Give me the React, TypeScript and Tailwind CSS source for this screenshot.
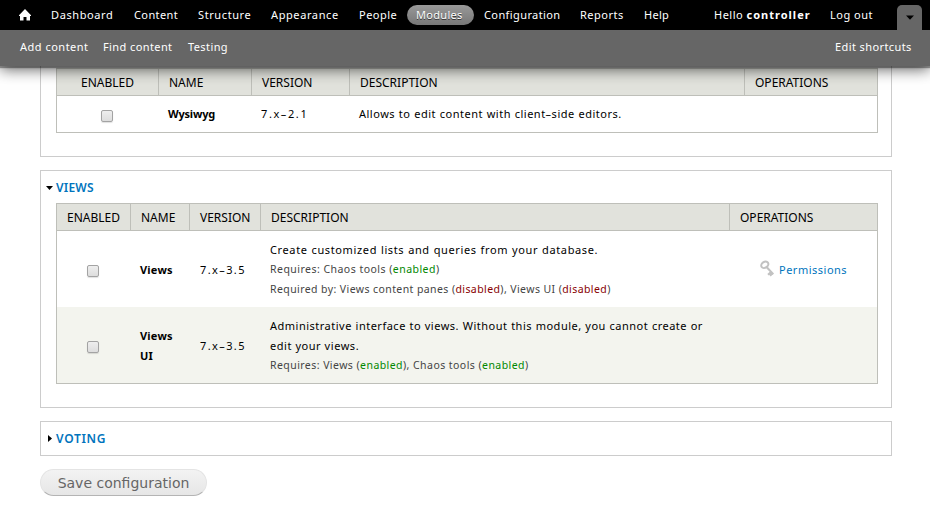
import type { ReactNode } from 'react';

const mainLinks = [
  { label: 'Dashboard', box: 'w-[83px]', track: 'tracking-[0.6px]' },
  { label: 'Content', box: 'w-[64px]', track: 'tracking-[0.4px]' },
  { label: 'Structure', box: 'w-[73px]', track: 'tracking-[0.6px]' },
  { label: 'Appearance', box: 'w-[88px]', track: 'tracking-[0.6px]' },
  { label: 'People', box: 'w-[48px]', track: 'tracking-[0.5px]' },
];

const trailingLinks = [
  { label: 'Configuration', box: 'w-[96px]', track: 'tracking-[0.4px]' },
  { label: 'Reports', box: 'w-[64px]', track: 'tracking-[0.5px]' },
  { label: 'Help', box: 'w-[70px]', track: 'tracking-[0.3px]' },
];

function Toolbar() {
  return (
    <header className="relative z-10 h-[66px] bg-[#666] text-[11px] text-white shadow-[0_2px_1px_rgba(0,0,0,0.35),0_3px_14px_rgba(0,0,0,0.65)]">
      <nav className="flex h-[30px] items-center bg-black pl-[19px] whitespace-nowrap">
        <svg className="mr-[20px] shrink-0" width="12" height="12" viewBox="0 0 12 12" fill="#fff">
          <path d="M6 0 12 6.2V7h-1v4.5H7.5V8h-3v3.5H1V7H0v-.8L6 0Z" />
        </svg>
        {mainLinks.map((l) => (
          <a key={l.label} className={`shrink-0 ${l.box} ${l.track}`}>{l.label}</a>
        ))}
        <a className="mr-[10px] h-[20px] w-[67px] shrink-0 rounded-full bg-linear-to-b from-[#999] to-[#777] pl-[9px] leading-[20px] tracking-[0.3px] [text-shadow:0_1px_0_#333]">Modules</a>
        {trailingLinks.map((l) => (
          <a key={l.label} className={`shrink-0 ${l.box} ${l.track}`}>{l.label}</a>
        ))}
        <a className="w-[116px] shrink-0 tracking-[0.5px]">Hello <strong className="tracking-[1px]">controller</strong></a>
        <a className="w-[67px] shrink-0 tracking-[0.5px]">Log out</a>
        <button className="flex h-[25px] w-[25px] shrink-0 items-center justify-center self-end rounded-t-[5px] bg-[#666]">
          <svg width="8" height="5" viewBox="0 0 8 5"><path d="M0 .5h8L4 4.8Z" /></svg>
        </button>
      </nav>
      <div className="flex h-[35px] items-center pr-[18px] pl-[20px] whitespace-nowrap">
        <a className="w-[83px] tracking-[0.5px]">Add content</a>
        <a className="w-[85px] tracking-[0.4px]">Find content</a>
        <a className="tracking-[0.4px]">Testing</a>
        <a className="ml-auto w-[77px] tracking-[0.4px]">Edit shortcuts</a>
      </div>
    </header>
  );
}

function HeaderRow({ cols, first }: { cols: string; first: string }) {
  return (
    <div className={`grid h-[27px] border-b border-[#bebfb9] bg-[#e1e2dc] text-[12px] leading-[27px] ${cols}`}>
      <div className={first}>ENABLED</div>
      <div className="border-l border-[#bebfb9] pl-[10px]">NAME</div>
      <div className="border-l border-[#bebfb9] pl-[10px]">VERSION</div>
      <div className="border-l border-[#bebfb9] pl-[10px]">DESCRIPTION</div>
      <div className="border-l border-[#bebfb9] pl-[10px]">OPERATIONS</div>
    </div>
  );
}

function Checkbox() {
  return <span className="mt-[3px] block size-[12px] rounded-[2px] border border-[#a3a3a3] bg-linear-to-b from-[#eee] to-[#ddd] shadow-[0_1px_1px_rgba(0,0,0,0.12)]" />;
}

function Status({ on, children }: { on?: boolean; children: ReactNode }) {
  return <span className={on ? 'text-[#080]' : 'text-[#800]'}>{children}</span>;
}

function Key() {
  return (
    <svg className="mb-[2px]" width="15" height="17" viewBox="0 0 15 17" fill="none" stroke="#c2c2c2" strokeWidth="2">
      <ellipse cx="4.8" cy="4.8" rx="3.8" ry="2.9" transform="rotate(-35 4.8 4.8)" />
      <path d="m6.8 7.2 6.5 7M11 12l-3 2.8M12.3 13.5 10 15.8" />
    </svg>
  );
}

const viewCols = 'grid-cols-[73px_59px_71px_469px_148px]';

export default function App() {
  return (
    <div className="h-[523px] w-[930px] overflow-hidden bg-white font-['Noto_Sans','Open_Sans',sans-serif] text-[11px] text-black">
      <Toolbar />
      <main className="px-[40px] pr-[38px]">
        <section className="h-[91px] border border-t-0 border-[#ccc] px-[15px] pr-[13px] pt-[2px]">
          <div className="h-[65px] border border-[#bebfb9]">
            <HeaderRow cols="grid-cols-[101px_93px_98px_395px_133px]" first="pl-[24px]" />
            <div className="grid h-[36px] grid-cols-[101px_93px_98px_395px_133px] items-center whitespace-nowrap">
              <div className="pl-[44px]"><Checkbox /></div>
              <strong className="pt-px pl-[10px] tracking-[-0.2px]">Wysiwyg</strong>
              <div className="pt-px pl-[10px] tracking-[1.6px]">7.x–2.1</div>
              <div className="pt-px pl-[10px] tracking-[0.5px] [word-spacing:0.4px]">Allows to edit content with client–side editors.</div>
            </div>
          </div>
        </section>

        <section className="mt-[13px] h-[238px] border border-[#ccc] px-[15px] pr-[13px]">
          <div className="-ml-[10px] flex h-[32px] items-center pt-px text-[12px] font-semibold tracking-[0.2px] text-[#0074bd]">
            <svg className="mr-[3px]" width="7" height="4" viewBox="0 0 7 4"><path d="M0 0h7L3.5 4Z" /></svg>
            VIEWS
          </div>
          <div className="h-[181px] border border-[#bebfb9]">
            <HeaderRow cols={viewCols} first="pl-[10px]" />
            <div className={`grid h-[76px] items-center whitespace-nowrap ${viewCols}`}>
              <div className="pl-[30px]"><Checkbox /></div>
              <strong className="pt-[2px] pl-[10px] tracking-[0.2px]">Views</strong>
              <div className="pt-[2px] pl-[11px] tracking-[1.4px]">7.x–3.5</div>
              <div className="pl-[10px] leading-[20px]">
                <p className="tracking-[0.63px] [word-spacing:0.4px]">Create customized lists and queries from your database.</p>
                <p className="-mt-px text-[10.5px] tracking-[0.47px] text-[#444]">Requires: Chaos tools (<Status on>enabled</Status>)</p>
                <p className="text-[10.5px] tracking-[0.41px] text-[#444]">Required by: Views content panes (<Status>disabled</Status>), Views UI (<Status>disabled</Status>)</p>
              </div>
              <a className="flex items-center pl-[31px] tracking-[0.5px] text-[#0074bd]"><Key /><span className="mt-[2px] ml-[4px]">Permissions</span></a>
            </div>
            <div className={`grid h-[76px] items-center bg-[#f3f4ee] whitespace-nowrap ${viewCols}`}>
              <div className="pl-[30px]"><Checkbox /></div>
              <strong className="pt-[2px] pl-[10px] leading-[20px] tracking-[0.2px]">Views<br />UI</strong>
              <div className="pt-[2px] pl-[11px] tracking-[1.4px]">7.x–3.5</div>
              <div className="pl-[10px] leading-[20px]">
                <p className="tracking-[0.5px] [word-spacing:0.3px]">Administrative interface to views. Without this module, you cannot create or</p>
                <p className="tracking-[0.55px]">edit your views.</p>
                <p className="-mt-px text-[10.5px] tracking-[0.44px] text-[#444]">Requires: Views (<Status on>enabled</Status>), Chaos tools (<Status on>enabled</Status>)</p>
              </div>
            </div>
          </div>
        </section>

        <section className="mt-[13px] flex h-[35px] items-center border border-[#ccc] pl-[7px] text-[12px] font-semibold tracking-[0.7px] text-[#0074bd]">
          <svg className="mr-[4px]" width="4" height="7" viewBox="0 0 4 7"><path d="M0 0v7L4 3.5Z" /></svg>
          VOTING
        </section>

        <button className="mt-[13px] block h-[27px] w-[167px] rounded-full border border-[#e4e4e4] border-b-[#b4b4b4] bg-linear-to-b from-[#f3f3f3] to-[#e6e6e6] pt-px text-center font-['DejaVu_Sans',sans-serif] text-[14px] leading-[25px] text-[#666]">Save configuration</button>
      </main>
    </div>
  );
}
